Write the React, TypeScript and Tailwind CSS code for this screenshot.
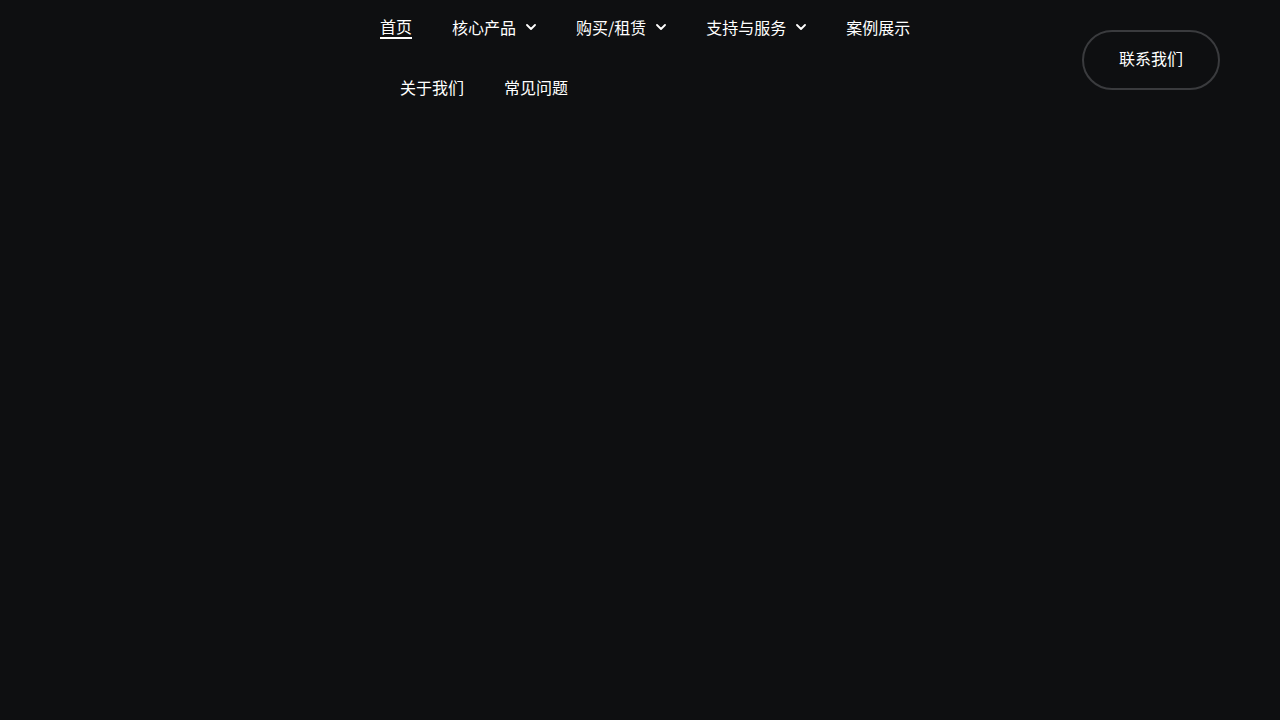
import React from 'react';

const navItems = [
  { label: '首页', active: true },
  { label: '核心产品', menu: true },
  { label: '购买/租赁', menu: true },
  { label: '支持与服务', menu: true },
  { label: '案例展示' },
  { label: '关于我们' },
  { label: '常见问题' },
];

const Chevron = () => (
  <svg className="ml-2.5 h-[6px] w-[10px]" viewBox="0 0 10 6" fill="none">
    <path d="M1 1l4 4 4-4" stroke="currentColor" strokeWidth="1.8" strokeLinecap="round" strokeLinejoin="round" />
  </svg>
);

const App = () => {
  return (
    <div
      className="min-h-screen w-full bg-[#0e0f11] text-white"
      style={{ fontFamily: '"Noto Sans CJK SC", "Noto Sans", sans-serif' }}
    >
      <header className="flex items-start justify-between pl-[380px] pr-[60px]">
        {/* Main nav */}
        <nav className="flex w-[600px] flex-wrap">
          {navItems.map((item, i) => (
            <a
              key={item.label}
              href="#"
              className={`flex h-[60px] items-center px-5 pb-1.5 text-base text-white ${
                i === 0 ? '-ml-5' : ''
              }`}
            >
              <span
                className={
                  item.active ? 'border-b-2 border-white leading-[22px]' : 'leading-[22px]'
                }
              >
                {item.label}
              </span>
              {item.menu && <Chevron />}
            </a>
          ))}
        </nav>

        {/* Contact */}
        <button className="mt-[30px] flex h-[60px] items-center rounded-full border-2 border-[#3a3b3e] px-[35px] pb-1 text-base text-white">
          联系我们
        </button>
      </header>
    </div>
  );
};

export default App;
